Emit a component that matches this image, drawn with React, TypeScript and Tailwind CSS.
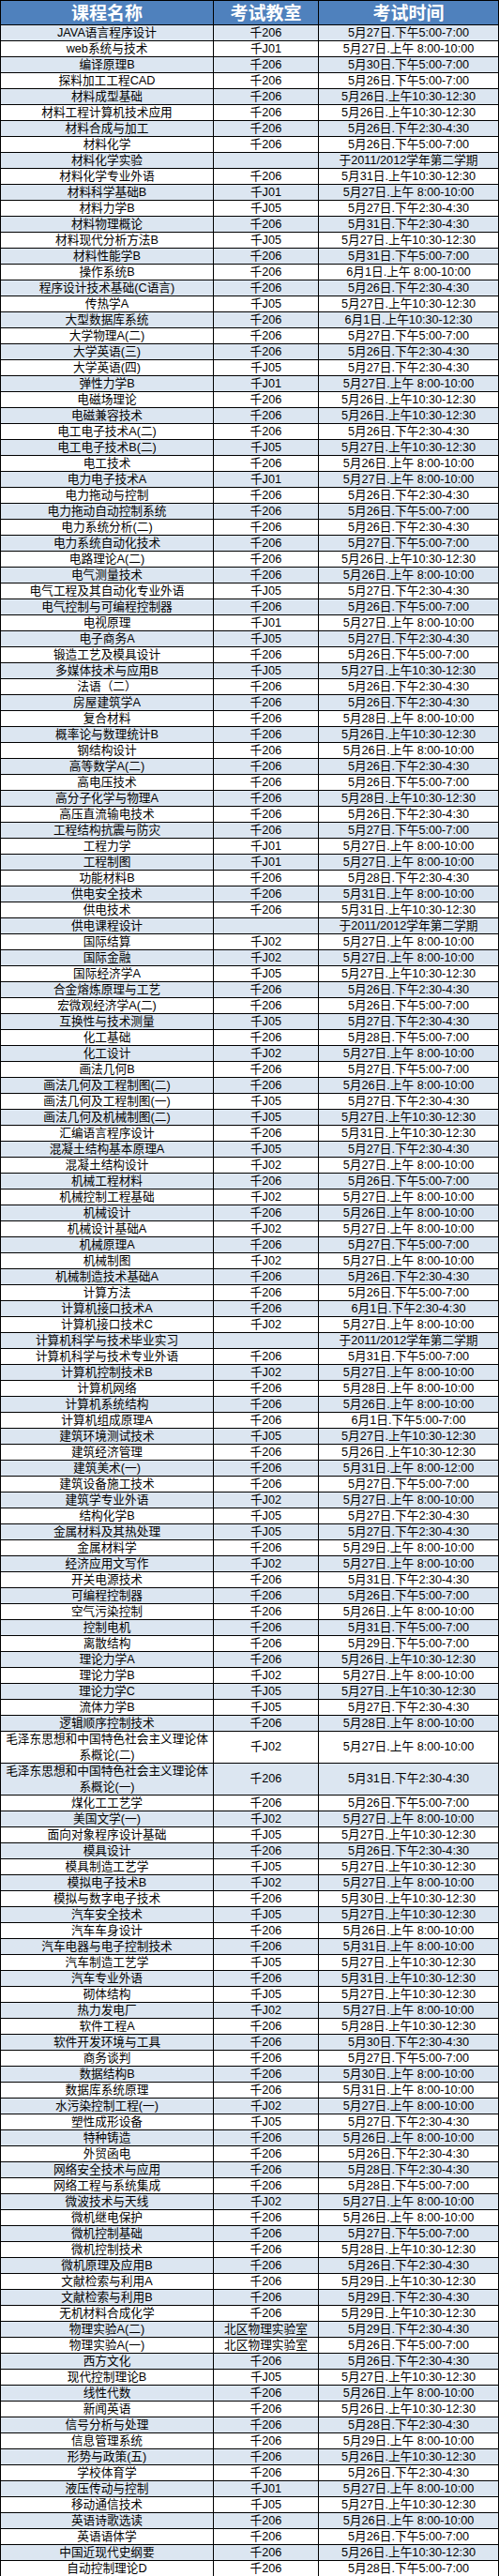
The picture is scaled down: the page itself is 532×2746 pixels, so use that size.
const data = `JAVA语言程序设计|千206|5月27日.下午5:00-7:00
web系统与技术|千J01|5月27日.上午 8:00-10:00
编译原理B|千206|5月30日.下午5:00-7:00
探料加工工程CAD|千206|5月26日.下午5:00-7:00
材料成型基础|千206|5月26日.上午10:30-12:30
材料工程计算机技术应用|千206|5月26日.上午10:30-12:30
材料合成与加工|千206|5月26日.下午2:30-4:30
材料化学|千206|5月26日.下午5:00-7:00
材料化学实验||于2011/2012学年第二学期
材料化学专业外语|千206|5月31日.上午10:30-12:30
材料科学基础B|千J01|5月27日.上午 8:00-10:00
材料力学B|千J05|5月27日.下午2:30-4:30
材料物理概论|千206|5月31日.下午2:30-4:30
材料现代分析方法B|千J05|5月27日.上午10:30-12:30
材料性能学B|千206|5月31日.下午5:00-7:00
操作系统B|千206|6月1日.上午 8:00-10:00
程序设计技术基础(C语言)|千206|5月26日.下午2:30-4:30
传热学A|千J05|5月27日.上午10:30-12:30
大型数据库系统|千206|6月1日.上午10:30-12:30
大学物理A(二)|千206|5月27日.下午5:00-7:00
大学英语(三)|千206|5月26日.下午2:30-4:30
大学英语(四)|千J05|5月27日.下午2:30-4:30
弹性力学B|千J01|5月27日.上午 8:00-10:00
电磁场理论|千206|5月26日.上午10:30-12:30
电磁兼容技术|千206|5月26日.上午10:30-12:30
电工电子技术A(二)|千206|5月26日.下午2:30-4:30
电工电子技术B(二)|千J05|5月27日.上午10:30-12:30
电工技术|千206|5月26日.上午 8:00-10:00
电力电子技术A|千J01|5月27日.上午 8:00-10:00
电力拖动与控制|千206|5月26日.下午2:30-4:30
电力拖动自动控制系统|千206|5月26日.下午5:00-7:00
电力系统分析(二)|千206|5月26日.下午2:30-4:30
电力系统自动化技术|千206|5月27日.下午5:00-7:00
电路理论A(二)|千206|5月26日.上午10:30-12:30
电气测量技术|千206|5月26日.上午 8:00-10:00
电气工程及其自动化专业外语|千J05|5月27日.下午2:30-4:30
电气控制与可编程控制器|千206|5月26日.下午5:00-7:00
电视原理|千J01|5月27日.上午 8:00-10:00
电子商务A|千J05|5月27日.下午2:30-4:30
锻造工艺及模具设计|千206|5月26日.下午5:00-7:00
多媒体技术与应用B|千J05|5月27日.上午10:30-12:30
法语（二）|千206|5月26日.下午2:30-4:30
房屋建筑学A|千206|5月26日.下午2:30-4:30
复合材料|千206|5月28日.上午 8:00-10:00
概率论与数理统计B|千206|5月26日.上午10:30-12:30
钢结构设计|千206|5月26日.上午 8:00-10:00
高等数学A(二)|千206|5月26日.下午2:30-4:30
高电压技术|千206|5月26日.下午5:00-7:00
高分子化学与物理A|千206|5月28日.上午10:30-12:30
高压直流输电技术|千206|5月26日.下午2:30-4:30
工程结构抗震与防灾|千206|5月27日.下午5:00-7:00
工程力学|千J01|5月27日.上午 8:00-10:00
工程制图|千J01|5月27日.上午 8:00-10:00
功能材料B|千206|5月28日.下午2:30-4:30
供电安全技术|千206|5月31日.上午 8:00-10:00
供电技术|千206|5月31日.上午10:30-12:30
供电课程设计||于2011/2012学年第二学期
国际结算|千J02|5月27日.上午 8:00-10:00
国际金融|千J02|5月27日.上午 8:00-10:00
国际经济学A|千J05|5月27日.上午10:30-12:30
合金熔炼原理与工艺|千206|5月26日.下午2:30-4:30
宏微观经济学A(二)|千206|5月26日.下午5:00-7:00
互换性与技术测量|千J05|5月27日.下午2:30-4:30
化工基础|千206|5月28日.下午5:00-7:00
化工设计|千J02|5月27日.上午 8:00-10:00
画法几何B|千206|5月27日.下午5:00-7:00
画法几何及工程制图(二)|千206|5月26日.上午 8:00-10:00
画法几何及工程制图(一)|千J05|5月27日.下午2:30-4:30
画法几何及机械制图(二)|千J05|5月27日.上午10:30-12:30
汇编语言程序设计|千206|5月31日.上午10:30-12:30
混凝土结构基本原理A|千J05|5月27日.下午2:30-4:30
混凝土结构设计|千J02|5月27日.上午 8:00-10:00
机械工程材料|千206|5月26日.下午5:00-7:00
机械控制工程基础|千J02|5月27日.上午 8:00-10:00
机械设计|千206|5月26日.上午 8:00-10:00
机械设计基础A|千J02|5月27日.上午 8:00-10:00
机械原理A|千206|5月27日.下午5:00-7:00
机械制图|千J02|5月27日.上午 8:00-10:00
机械制造技术基础A|千206|5月26日.下午2:30-4:30
计算方法|千206|5月26日.下午5:00-7:00
计算机接口技术A|千206|6月1日.下午2:30-4:30
计算机接口技术C|千J02|5月27日.上午 8:00-10:00
计算机科学与技术毕业实习||于2011/2012学年第二学期
计算机科学与技术专业外语|千206|5月31日.下午5:00-7:00
计算机控制技术B|千J02|5月27日.上午 8:00-10:00
计算机网络|千206|5月28日.上午 8:00-10:00
计算机系统结构|千206|5月26日.上午 8:00-10:00
计算机组成原理A|千206|6月1日.下午5:00-7:00
建筑环境测试技术|千J05|5月27日.上午10:30-12:30
建筑经济管理|千206|5月26日.上午10:30-12:30
建筑美术(一)|千206|5月31日.上午 8:00-12:00
建筑设备施工技术|千206|5月27日.下午5:00-7:00
建筑学专业外语|千J02|5月27日.上午 8:00-10:00
结构化学B|千J05|5月27日.下午2:30-4:30
金属材料及其热处理|千J05|5月27日.下午2:30-4:30
金属材料学|千206|5月29日.上午 8:00-10:00
经济应用文写作|千J02|5月27日.上午 8:00-10:00
开关电源技术|千206|5月31日.下午2:30-4:30
可编程控制器|千206|5月26日.下午5:00-7:00
空气污染控制|千206|5月26日.上午 8:00-10:00
控制电机|千206|5月31日.下午5:00-7:00
离散结构|千206|5月29日.下午5:00-7:00
理论力学A|千206|5月26日.上午10:30-12:30
理论力学B|千J02|5月27日.上午 8:00-10:00
理论力学C|千J05|5月27日.上午10:30-12:30
流体力学B|千J05|5月27日.下午2:30-4:30
逻辑顺序控制技术|千206|5月28日.上午 8:00-10:00
毛泽东思想和中国特色社会主义理论体^系概论(二)|千J02|5月27日.上午 8:00-10:00
毛泽东思想和中国特色社会主义理论体^系概论(一)|千206|5月31日.下午2:30-4:30
煤化工工艺学|千206|5月26日.下午5:00-7:00
美国文学(一)|千J02|5月27日.上午 8:00-10:00
面向对象程序设计基础|千J05|5月27日.上午10:30-12:30
模具设计|千206|5月26日.下午2:30-4:30
模具制造工艺学|千J05|5月27日.上午10:30-12:30
模拟电子技术B|千J02|5月27日.上午 8:00-10:00
模拟与数字电子技术|千206|5月30日.上午10:30-12:30
汽车安全技术|千J05|5月27日.上午10:30-12:30
汽车车身设计|千206|5月26日.上午 8:00-10:00
汽车电器与电子控制技术|千206|5月31日.上午 8:00-10:00
汽车制造工艺学|千J05|5月27日.上午10:30-12:30
汽车专业外语|千206|5月31日.上午10:30-12:30
砌体结构|千J05|5月27日.上午10:30-12:30
热力发电厂|千J02|5月27日.上午 8:00-10:00
软件工程A|千206|5月28日.上午10:30-12:30
软件开发环境与工具|千206|5月30日.下午2:30-4:30
商务谈判|千206|5月27日.下午5:00-7:00
数据结构B|千206|5月30日.上午 8:00-10:00
数据库系统原理|千206|5月31日.上午 8:00-10:00
水污染控制工程(一)|千J02|5月27日.上午 8:00-10:00
塑性成形设备|千J05|5月27日.下午2:30-4:30
特种铸造|千206|5月26日.上午 8:00-10:00
外贸函电|千206|5月26日.下午2:30-4:30
网络安全技术与应用|千206|5月28日.下午2:30-4:30
网络工程与系统集成|千206|5月28日.下午5:00-7:00
微波技术与天线|千J02|5月27日.上午 8:00-10:00
微机继电保护|千206|5月26日.上午 8:00-10:00
微机控制基础|千206|5月27日.下午5:00-7:00
微机控制技术|千206|5月28日.上午10:30-12:30
微机原理及应用B|千206|5月26日.下午2:30-4:30
文献检索与利用A|千206|5月29日.上午10:30-12:30
文献检索与利用B|千206|5月29日.下午2:30-4:30
无机材料合成化学|千206|5月29日.上午10:30-12:30
物理实验A(二)|北区物理实验室|5月29日.下午2:30-4:30
物理实验A(一)|北区物理实验室|5月26日.下午5:00-7:00
西方文化|千206|5月26日.下午2:30-4:30
现代控制理论B|千J05|5月27日.上午10:30-12:30
线性代数|千206|5月26日.上午 8:00-10:00
新闻英语|千206|5月26日.上午10:30-12:30
信号分析与处理|千206|5月28日.下午2:30-4:30
信息管理系统|千206|5月29日.上午 8:00-10:00
形势与政策(五)|千206|5月26日.上午10:30-12:30
学校体育学|千206|5月26日.下午2:30-4:30
液压传动与控制|千J01|5月27日.上午 8:00-10:00
移动通信技术|千J05|5月27日.上午10:30-12:30
英语诗歌选读|千206|5月26日.上午 8:00-10:00
英语语体学|千206|5月26日.下午5:00-7:00
中国近现代史纲要|千206|5月26日.上午10:30-12:30
自动控制理论D|千206|5月28日.下午5:00-7:00`;

const rows = data.split('\n').map(line => line.split('|'));

export default function App() {
  return (
    <div className="w-[532px] bg-white font-['Liberation_Sans','Noto_Sans_CJK_SC',sans-serif] text-black">
      <div className="border-t border-l border-black">
        {/* 表头 */}
        <div className="flex h-[26px] bg-[#4f81bd] border-b border-black text-white font-bold text-[19px] font-['Noto_Sans_CJK_SC',sans-serif]">
          <div className="w-[227px] flex items-center justify-center border-r border-black">课程名称</div>
          <div className="w-[112px] flex items-center justify-center border-r border-black">考试教室</div>
          <div className="flex-1 flex items-center justify-center border-r border-black">考试时间</div>
        </div>

        {rows.map(([name, room, time], i) => {
          const lines = name.split('^');
          return (
            <div
              key={i}
              className={`flex border-b border-black text-[12.7px] leading-[17px] ${
                lines.length > 1 ? 'h-[34px]' : 'h-[17px]'
              } ${i % 2 === 0 ? 'bg-[#dce6f1]' : 'bg-white'}`}
            >
              <div className="w-[227px] flex flex-col items-center justify-center border-r border-black whitespace-nowrap">
                {lines.map((l, j) => (
                  <span key={j}>{l}</span>
                ))}
              </div>
              <div className="w-[112px] flex items-center justify-center border-r border-black whitespace-nowrap">
                {room}
              </div>
              <div className="flex-1 flex items-center justify-center border-r border-black whitespace-pre">
                {time}
              </div>
            </div>
          );
        })}
      </div>
    </div>
  );
}
